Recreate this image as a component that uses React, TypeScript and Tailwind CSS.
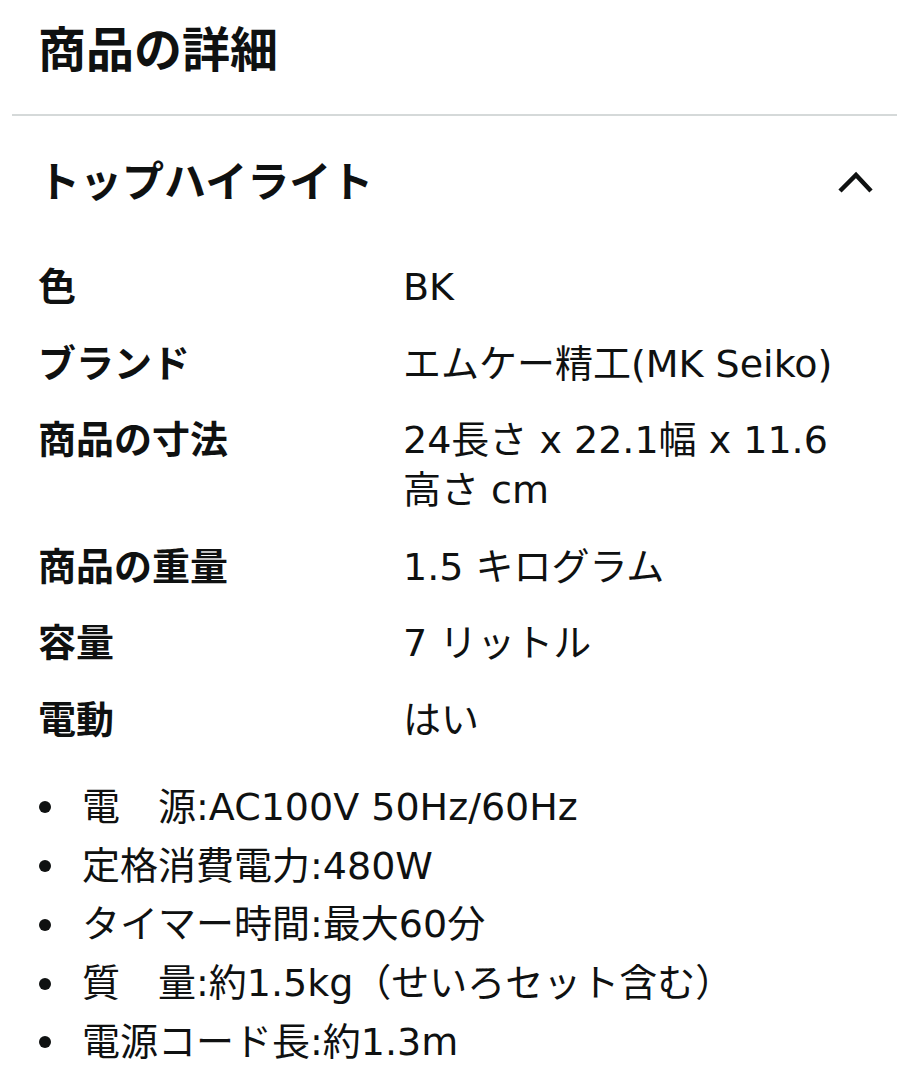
import React from "react";

const rows: { label: string; value: React.ReactNode }[] = [
  { label: "色", value: "BK" },
  { label: "ブランド", value: "エムケー精工(MK Seiko)" },
  {
    label: "商品の寸法",
    value: (
      <>
        24長さ x 22.1幅 x 11.6
        <br />
        高さ cm
      </>
    ),
  },
  { label: "商品の重量", value: "1.5 キログラム" },
  { label: "容量", value: "7 リットル" },
  { label: "電動", value: "はい" },
];

const bullets = [
  "電　源:AC100V 50Hz/60Hz",
  "定格消費電力:480W",
  "タイマー時間:最大60分",
  "質　量:約1.5kg（せいろセット含む）",
  "電源コード長:約1.3m",
];

export default function App() {
  return (
    <div
      className="w-[909px] h-[1080px] overflow-hidden bg-white text-[#0f1111]"
      style={{ fontFamily: '"DejaVu Sans", "Noto Sans CJK JP", sans-serif' }}
    >
      <h2 className="pl-[38px] pt-[21px] text-[48px] leading-[58px] font-bold">商品の詳細</h2>
      <div className="mx-[12px] mt-[35px] h-[2px] bg-[#d5d9d9]" />
      <div className="flex items-center justify-between pl-[38px] pr-[36px] pt-[38px]">
        <span className="text-[42px] leading-[58px] font-bold">トップハイライト</span>
        <svg width="36" height="24" viewBox="0 0 36 24" fill="none">
          <polyline
            points="3,20 19,4 34,20"
            stroke="#0f1111"
            strokeWidth="4.5"
            strokeLinecap="butt"
            strokeLinejoin="miter"
          />
        </svg>
      </div>
      <div className="mt-[50px] grid grid-cols-[365px_1fr] gap-y-[26.6px] pl-[38px] text-[38px] leading-[50px]">
        {rows.map((r) => (
          <React.Fragment key={r.label}>
            <div className="font-bold">{r.label}</div>
            <div>{r.value}</div>
          </React.Fragment>
        ))}
      </div>
      <ul className="mt-[33px] text-[38px] leading-[58.75px]">
        {bullets.map((b) => (
          <li key={b} className="flex items-center">
            <span className="ml-[39px] mr-[31px] h-[12px] w-[12px] shrink-0 rounded-full bg-[#0f1111]" />
            <span>{b}</span>
          </li>
        ))}
      </ul>
    </div>
  );
}
